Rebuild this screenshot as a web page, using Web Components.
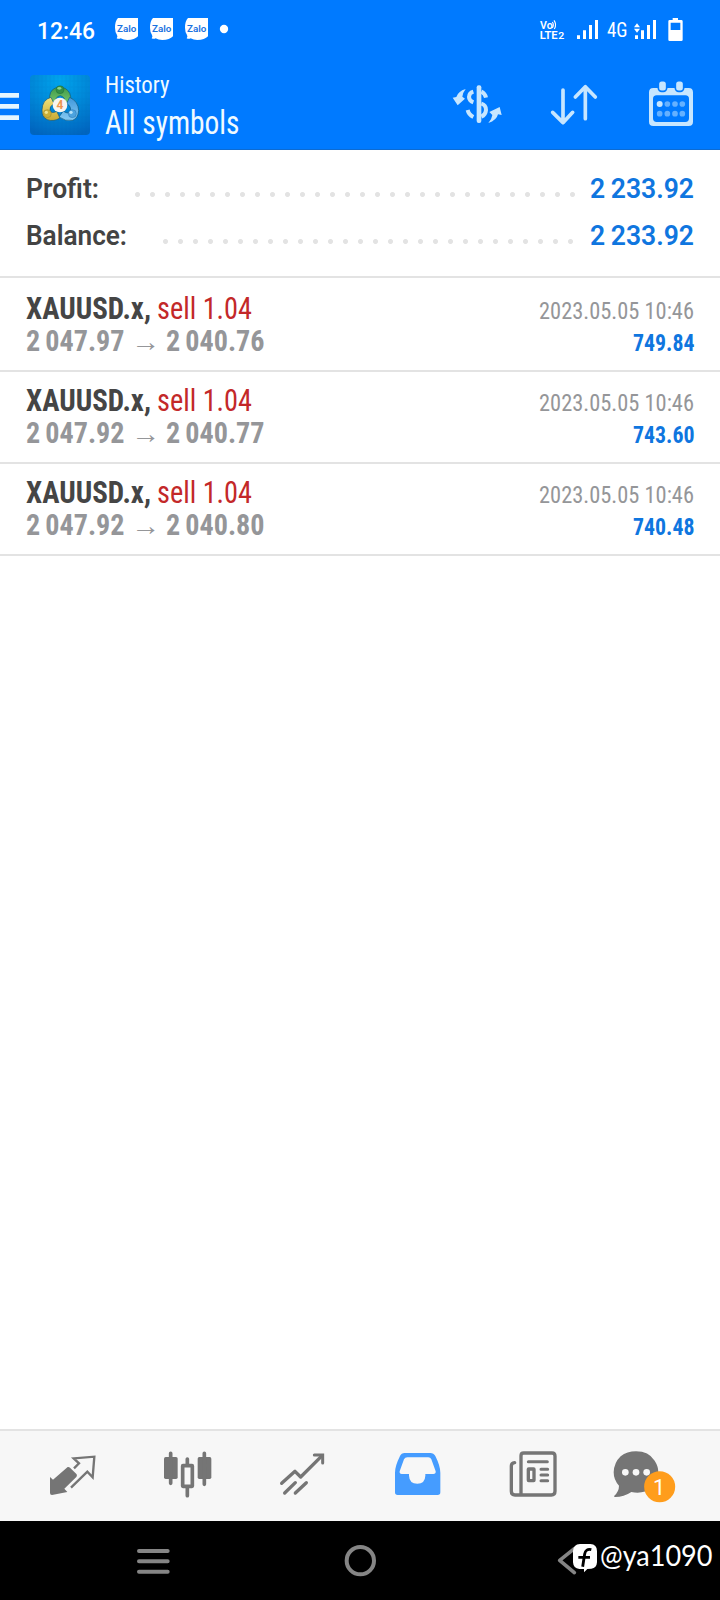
<!DOCTYPE html>
<html lang="en">
<head>
<meta charset="utf-8">
<title>History</title>
<style>
body{margin:0;background:#fff;font-family:Roboto,"Liberation Sans",sans-serif}
</style>
</head>
<body>
<trade-app></trade-app>
<script>
/* Icon artwork, drawn on a grid of three units per CSS pixel: [x, y, width, height, markup] */
const zalo = `<path fill="#fff" d="M354 54H414V109Q404 120 382 120Q370 120 362 115Q356 118 350 115Q354 111 351 105Q345 96 345 83Q345 63 354 54Z"/><text x="351" y="95" textLength="58" lengthAdjust="spacingAndGlyphs" font-size="28" font-weight="600" fill="#1a72e0">Zalo</text>`;
const ICONS = {
  zalo: [345,0,69,180,zalo],
  dot: [657,0,30,180,`<circle cx="672" cy="87" r="12.5" fill="#fff"/>`],
  volte: [330,0,72,180,`<g fill="#fff" font-weight="600"><text x="330" y="87" font-size="31" textLength="38" lengthAdjust="spacingAndGlyphs">Vo</text><text x="329" y="117" font-size="32" textLength="54" lengthAdjust="spacingAndGlyphs">LTE</text><text x="385" y="117" font-size="29" textLength="18" lengthAdjust="spacingAndGlyphs">2</text></g><g fill="none" stroke="#fff" stroke-width="3.5"><path d="M367 66Q373 74 367 84M372 61Q381 73 373 87"/></g>`],
  signal: [441,0,63,180,`<path fill="#fff" d="M441 106h9v11h-9zM459 91h9v26h-9zM477 75h9v42h-9zM495 60h9v57h-9z"/>`],
  signal2: [612,0,66,180,`<path fill="#fff" d="M615 106h9v11h-9zM633 91h9v26h-9zM651 75h9v42h-9zM669 60h9v57h-9zM612 82L621 70L630 82ZM612 86L621 98L630 86Z"/>`],
  battery: [714,0,45,180,`<path fill="#fff" fill-rule="evenodd" d="M728 54H744V60H754Q758 60 758 64V119Q758 123 754 123H719Q715 123 715 119V64Q715 60 719 60H728ZM722 68V90H751V68Z"/>`],
  menu: [0,180,57,270,`<path fill="#e4f6ff" d="M0 279H57V293H0zM0 312H57V326H0zM0 346H57V360H0z"/>`],
  app: [90,180,180,270,`<defs>
    <radialGradient id="b" cx=".5" cy=".1" r=".95"><stop offset="0" stop-color="#00a5ee"/><stop offset=".55" stop-color="#0085d6"/><stop offset="1" stop-color="#0065bf"/></radialGradient>
    <linearGradient id="g" x2="0" y2="1"><stop offset="0" stop-color="#3f9a4a"/><stop offset="1" stop-color="#74c46a"/></linearGradient>
    <linearGradient id="y" x2="0" y2="1"><stop offset="0" stop-color="#f0e27c"/><stop offset="1" stop-color="#c9a932"/></linearGradient>
    <linearGradient id="u" x2="0" y2="1"><stop offset="0" stop-color="#3f97db"/><stop offset="1" stop-color="#86cbf4"/></linearGradient></defs>
    <rect x="90" y="225" width="180" height="180" rx="12" fill="url(#b)"/>
    <path d="M102 225V405M114 225V405M126 225V405M138 225V405M150 225V405M162 225V405M174 225V405M186 225V405M198 225V405M210 225V405M222 225V405M234 225V405M246 225V405M258 225V405M90 243H270M90 261H270M90 279H270M90 297H270M90 315H270M90 333H270M90 351H270M90 369H270M90 387H270" stroke="#0060b0" stroke-width="1" opacity=".22"/>
    <g stroke="#12577a" stroke-width="2">
    <path fill="url(#g)" d="M149 302Q146 272 166 264Q180 258 195 265Q215 276 212 303L194 309Q197 291 181 287Q165 290 167 307Z"/>
    <path fill="url(#y)" d="M153 292Q127 299 126 330Q125 352 142 359Q161 366 180 354L170 334Q155 342 150 332Q147 319 162 311Z"/>
    <path fill="url(#u)" d="M209 292Q235 304 236 332Q234 355 218 361Q196 365 177 351L190 333Q203 344 211 334Q215 320 200 310Z"/></g>
    <circle cx="180" cy="269" r="12" fill="#348f46" stroke="#165d32"/><ellipse cx="178" cy="265" rx="6" ry="4" fill="#8dd488"/>
    <circle cx="142" cy="341" r="12" fill="#cbb038" stroke="#806b20"/><circle cx="139" cy="337" r="5" fill="#f1e58d"/>
    <circle cx="217" cy="341" r="12" fill="#4ca3df" stroke="#145b98"/><circle cx="213" cy="337" r="5" fill="#b7e3fa"/>
    <circle cx="180" cy="315" r="22" fill="#f7f5f0"/><text x="180" y="328" text-anchor="middle" font-size="36" font-weight="700" fill="#ee954f">4</text>`],
  money: [66,180,150,270,`<g fill="#c7e6ff"><path d="M68 293L79 291Q84 274 107 267Q99 277 97 290L105 296L83 316ZM215 345L204 343Q200 361 175 369Q185 359 187 345L178 336L209 321Z"/><rect x="140" y="256" width="14" height="113" rx="6"/></g><path fill="none" stroke="#c7e6ff" stroke-width="12" d="M130 275Q117 279 117 291Q117 302 130 307M154 275Q165 280 168 293M154 311Q168 315 168 330Q167 344 154 350M113 330Q116 344 130 351"/>`],
  sort: [363,180,138,270,`<path fill="none" stroke="#c7e6ff" stroke-width="11" stroke-linecap="round" stroke-linejoin="round" d="M399 270V367M368 337L399 368L428 337M466 356V262M436 291L466 260L496 291"/>`],
  calendar: [657,180,132,270,`<path fill="#c7e6ff" fill-rule="evenodd" d="M670 264H776Q789 264 789 277V365Q789 378 776 378H670Q657 378 657 365V277Q657 264 670 264ZM680 286Q669 286 669 297V355Q669 366 680 366H766Q777 366 777 355V297Q777 286 766 286Z"/><g fill="#c7e6ff" stroke="#007aff" stroke-width="5"><rect x="685" y="242" width="25" height="32" rx="10"/><rect x="736" y="242" width="25" height="32" rx="10"/></g><circle cx="689" cy="312" r="9" fill="#c7e6ff"/><g fill="#65b1ff"><circle cx="712" cy="312" r="8.5"/><circle cx="735" cy="312" r="8.5"/><circle cx="757" cy="312" r="8.5"/><circle cx="689" cy="341" r="8.5"/><circle cx="712" cy="341" r="8.5"/><circle cx="735" cy="341" r="8.5"/><circle cx="757" cy="341" r="8.5"/></g>`],
  quotes: [150,33,138,270,`<path fill="#757575" d="M150 171L159 179L203 141Q207 140 210 143L230 163Q232 168 229 171L193 206L202 216L156 225Q150 225 150 219Z"/><path fill="none" stroke="#757575" stroke-width="7" d="M222 145L237 130L221 115L283 110L278 172L262 155L213 203"/>`],
  chart: [489,33,147,270,`<g fill="#757575"><rect x="492" y="111" width="41" height="66" rx="5"/><rect x="593" y="111" width="41" height="66" rx="5"/></g><g fill="none" stroke="#757575" stroke-width="11" stroke-linecap="round"><path d="M512 100V190M613 100V193M562 117V133M562 204V227"/><rect x="548" y="137" width="29" height="62" rx="1"/></g>`],
  trade: [840,33,135,270,`<path fill="none" stroke="#757575" stroke-width="10" stroke-linecap="round" stroke-linejoin="round" d="M845 190L885 154L902 171L964 109M854 219L886 188M886 219L919 188"/><path fill="none" stroke="#757575" stroke-width="9" stroke-linecap="round" stroke-linejoin="miter" d="M943 105H968V129"/>`],
  inbox: [102,33,141,270,`<path fill="#459cff" fill-rule="evenodd" d="M134 99H211Q221 99 226 108Q241 138 241 158V217Q241 225 233 225H113Q105 225 105 217V158Q105 138 120 108Q124 99 134 99ZM142 112Q135 112 132 118L119 154Q118 162 125 162H147V167Q148 191 172 191Q195 191 196 167V162H220Q228 162 227 154L214 118Q211 112 205 112Z"/>`],
  news: [447,33,144,270,`<g fill="none" stroke="#757575" stroke-width="10"><path stroke-linecap="round" d="M464 128Q454 129 454 138V214Q454 225 465 225H574Q585 225 585 214V108Q585 99 576 99H491Q483 99 483 107V223"/><path stroke-linecap="round" d="M505 125H562M543 148H563M543 165H563M543 182H563" stroke-width="9"/><rect x="505" y="147" width="17" height="35" rx="1" stroke-width="10"/></g>`],
  chat: [759,33,186,270,`<path fill="#757575" d="M828 94Q866 94 884 122Q895 139 895 157Q895 186 875 204Q850 223 814 216Q792 231 765 231Q760 230 763 227Q777 214 777 197Q761 180 761 157Q762 128 782 109Q801 94 828 94Z"/><g fill="#f7f7f7"><circle cx="796" cy="157" r="10"/><circle cx="828" cy="157" r="10"/><circle cx="860" cy="157" r="10"/></g><circle cx="899" cy="200" r="46.5" fill="#ff9d1c"/><text x="897" y="224" text-anchor="middle" font-size="65" fill="#fff">1</text>`],
  recents: [411,303,99,237,`<path stroke="#858585" stroke-width="12" stroke-linecap="round" d="M417 393H503M417 424H503M417 455H503"/>`],
  home: [1032,303,99,237,`<circle cx="1081" cy="422" r="41" fill="none" stroke="#858585" stroke-width="12"/>`],
  back: [591,303,60,237,`<path fill="none" stroke="#858585" stroke-width="11" stroke-linecap="round" stroke-linejoin="round" d="M643 386L599 421L643 458"/>`],
  mark: [636,363,78,100,`<path fill="#fff" d="M660 372H691Q711 373 711 393V427Q710 444 694 446L682 447L672 457V447H658Q640 445 639 427V393Q640 373 660 372Z"/><path fill="none" stroke="#000" stroke-width="8.5" d="M694 389Q677 385 674 402L668 440M655 412H690"/>`]
};

class UiIcon extends HTMLElement {
  constructor(){
    super();
    this.attachShadow({mode:'open'});
  }
  connectedCallback(){
    const [x,y,w,h,body] = ICONS[this.getAttribute('name')];
    this.shadowRoot.innerHTML = `<style>:host{display:block;flex:none}svg{display:block;overflow:visible}text{font-family:Roboto,"Liberation Sans",sans-serif}</style><svg width="${w/3}" height="${h/3}" viewBox="${x} ${y} ${w} ${h}">${body}</svg>`;
  }
}
customElements.define('ui-icon', UiIcon);

/* One line of text: w = advance width, h = line height, b = baseline, size, weight, stretch */
class FitText extends HTMLElement {
  constructor(){
    super();
    this.attachShadow({mode:'open'});
  }
  connectedCallback(){
    const a = n => this.getAttribute(n);
    this.shadowRoot.innerHTML = `<style>:host{display:block;flex:none}svg{display:block;overflow:visible}text{font-family:${a('font')||'Roboto'},"Liberation Sans",sans-serif;font-stretch:${a('stretch')||'75%'};word-spacing:${a('space')||'0'};fill:currentColor}</style><svg width="${a('w')}" height="${a('h')}"><text x="0" y="${a('b')}" font-size="${a('size')}" font-weight="${a('weight')||400}" textLength="${a('w')}" lengthAdjust="spacingAndGlyphs"></text></svg>`;
    this.shadowRoot.querySelector('text').textContent = a('text');
  }
}
customElements.define('fit-text', FitText);

function define(name, html){
  const t = document.createElement('template');
  customElements.define(name, class extends HTMLElement {
    constructor(){
      super();
      let out = html;
      for (const at of this.attributes) out = out.replaceAll('{'+at.name+'}', at.value);
      t.innerHTML = out;
      this.attachShadow({mode:'open'}).append(t.content.cloneNode(true));
    }
  });
}

define('status-bar', `<style>
:host{display:flex;height:60px;padding:0 37px 0 37px;box-sizing:border-box;color:#fff}
.n{display:flex;gap:12px;margin-left:20px}.s{flex:1}.d{margin-left:11px}
.v{margin-right:13px}.g{margin:0 7px 0 9px}.b{margin-left:12px}
</style>
<fit-text text="12:46" w="58" h="60" b="39" size="23" weight="500" stretch="100%"></fit-text>
<div class="n"><ui-icon name="zalo"></ui-icon><ui-icon name="zalo"></ui-icon><ui-icon name="zalo"></ui-icon></div>
<ui-icon class="d" name="dot"></ui-icon><div class="s"></div>
<ui-icon class="v" name="volte"></ui-icon><ui-icon name="signal"></ui-icon>
<fit-text class="g" text="4G" w="20.5" h="60" b="36.5" size="20.5" weight="450"></fit-text>
<ui-icon name="signal2"></ui-icon><ui-icon class="b" name="battery"></ui-icon>`);

define('title-bar', `<style>
:host{display:flex;height:90px;box-sizing:border-box;border-bottom:1px solid #0d6bd2;padding-right:27px;color:#f0faff}
.a{margin-left:11px}.t{margin-left:14.5px;flex:1}.m{margin:0 52px 0 49px}
</style>
<ui-icon name="menu"></ui-icon><ui-icon class="a" name="app"></ui-icon>
<div class="t"><fit-text text="History" w="64.5" h="40" b="33" size="24.5" weight="450"></fit-text><fit-text text="All symbols" w="134.5" h="40" b="34.3" size="32.5" weight="450"></fit-text></div>
<ui-icon name="money"></ui-icon><ui-icon class="m" name="sort"></ui-icon><ui-icon name="calendar"></ui-icon>`);

define('summary-row', `<style>
:host{display:flex;height:47px;color:#434343}
.dots{flex:1;height:5px;margin:26px 15px 0 {gap}px;background:radial-gradient(circle at 2.5px 2.5px,#e3e3e3 2.1px,transparent 2.9px) 0 0/15px 5px}
.v{color:#0f76df}
</style>
<fit-text text="{label}" w="{lw}" h="47" b="32" size="27" weight="620" stretch="95%"></fit-text><div class="dots"></div>
<fit-text class="v" text="2 233.92" w="104" h="47" b="32" size="27" weight="620" stretch="97%" space="-1px"></fit-text>`);

define('summary-panel', `<style>
:host{display:block;height:128px;box-sizing:border-box;padding:16px 26px 0 26px;border-bottom:2px solid #e3e3e3}
</style>
<summary-row label="Profit:" lw="73" gap="36"></summary-row>
<summary-row label="Balance:" lw="101" gap="36"></summary-row>`);

define('deal-row', `<style>
:host{display:flex;justify-content:space-between;height:92px;box-sizing:border-box;padding:11px 26px 0 26px;border-bottom:2px solid #e3e3e3;color:#959699}
.l{display:flex}.s{color:#454545}.o{color:#c32829;margin-left:6px}.m{margin:0 6px 0 6px}
.r{display:flex;flex-direction:column;align-items:flex-end}.p{color:#0f76df}
</style>
<div><div class="l"><fit-text class="s" text="XAUUSD.x," w="125" h="32" b="28" size="30.5" weight="700"></fit-text><fit-text class="o" text="sell 1.04" w="95" h="32" b="28" size="30.5"></fit-text></div>
<div class="l"><fit-text text="{open}" w="98.5" h="32" b="28" size="30" weight="700" space="-1.5px"></fit-text><fit-text class="m" text="→" font="Liberation Sans" w="29" h="32" b="28.3" size="27"></fit-text><fit-text text="{close}" w="98.5" h="32" b="28" size="30" weight="700" space="-1.5px"></fit-text></div></div>
<div class="r"><fit-text text="2023.05.05 10:46" w="155" h="32" b="28" size="24.5"></fit-text><fit-text class="p" text="{profit}" w="61.5" h="32" b="28" size="24.5" weight="700"></fit-text></div>`);

define('tab-bar', `<style>
:host{display:grid;grid-template-columns:113px 117px 114px 115px 104px 1fr;height:92px;box-sizing:border-box;padding-left:50px;background:#f7f7f7;border-top:2px solid #e3e3e3}
</style>
<ui-icon name="quotes"></ui-icon><ui-icon name="chart"></ui-icon><ui-icon name="trade"></ui-icon><ui-icon name="inbox"></ui-icon><ui-icon name="news"></ui-icon><ui-icon name="chat"></ui-icon>`);

define('nav-bar', `<style>
:host{display:grid;grid-template-columns:207px 213px 1fr;height:79px;padding-left:137px;background:#000;color:#fff;position:relative}
.w{position:absolute;left:572px;top:20px;display:flex;gap:2px}
</style>
<ui-icon name="recents"></ui-icon><ui-icon name="home"></ui-icon><ui-icon name="back"></ui-icon>
<div class="w"><ui-icon name="mark"></ui-icon><fit-text text="@ya1090" font="Lato" w="112.5" h="33" b="25.2" size="28"></fit-text></div>`);

define('trade-app', `<style>
:host{display:flex;flex-direction:column;height:1600px;background:#fff}
header{background:#007aff}main{flex:1}.first{height:94px;padding-top:13px}
</style>
<header><status-bar></status-bar><title-bar></title-bar></header>
<summary-panel></summary-panel>
<main>
<deal-row class="first" open="2 047.97" close="2 040.76" profit="749.84"></deal-row>
<deal-row open="2 047.92" close="2 040.77" profit="743.60"></deal-row>
<deal-row open="2 047.92" close="2 040.80" profit="740.48"></deal-row>
</main>
<tab-bar></tab-bar><nav-bar></nav-bar>`);
</script>
</body>
</html>
